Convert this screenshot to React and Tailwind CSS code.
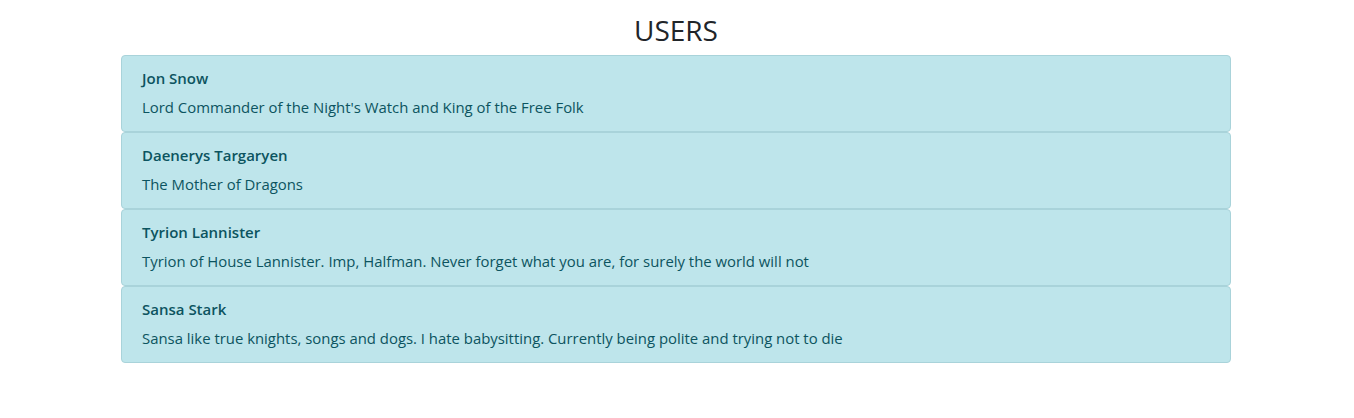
import React from "react";

const users = [
  { name: "Jon Snow", desc: "Lord Commander of the Night's Watch and King of the Free Folk" },
  { name: "Daenerys Targaryen", desc: "The Mother of Dragons" },
  { name: "Tyrion Lannister", desc: "Tyrion of House Lannister. Imp, Halfman. Never forget what you are, for surely the world will not" },
  { name: "Sansa Stark", desc: "Sansa like true knights, songs and dogs. I hate babysitting. Currently being polite and trying not to die" },
];

export default function App() {
  return (
    <div className="min-h-[418px] bg-white pl-[121px] pt-[14px] font-['Open_Sans',sans-serif]">
      <div className="w-[1110px]">
        <h3 className="mb-[8px] text-center text-[28px] leading-[33px] text-[#212529]">USERS</h3>
        <div className="flex flex-col">
          {users.map((u) => (
            <div
              key={u.name}
              className="h-[77px] rounded-[4px] border border-[#a9d3da] bg-[#bee5eb] px-[20px] pt-[11px] text-[#0c5460]"
            >
              <div className="text-[15px] font-semibold leading-[22px]">{u.name}</div>
              <div className="mt-[7px] text-[14.9px] leading-[22px]">{u.desc}</div>
            </div>
          ))}
        </div>
      </div>
    </div>
  );
}
